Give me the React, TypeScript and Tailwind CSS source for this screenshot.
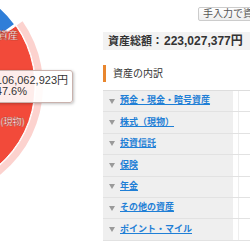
import React from 'react'

const CX = -70
const CY = 86
const R = 105

function polar(r: number, deg: number): [number, number] {
  const a = (deg * Math.PI) / 180
  return [CX + r * Math.cos(a), CY + r * Math.sin(a)]
}

function slicePath(r: number, from: number, to: number): string {
  const [x1, y1] = polar(r, from)
  const [x2, y2] = polar(r, to)
  const large = to - from > 180 ? 1 : 0
  return `M ${CX} ${CY} L ${x1} ${y1} A ${r} ${r} 0 ${large} 1 ${x2} ${y2} Z`
}

function ringPath(r1: number, r2: number, from: number, to: number): string {
  const [a1, b1] = polar(r2, from)
  const [a2, b2] = polar(r2, to)
  const [c1, d1] = polar(r1, to)
  const [c2, d2] = polar(r1, from)
  const large = to - from > 180 ? 1 : 0
  return `M ${a1} ${b1} A ${r2} ${r2} 0 ${large} 1 ${a2} ${b2} L ${c1} ${d1} A ${r1} ${r1} 0 ${large} 0 ${c2} ${d2} Z`
}

const ROWS = ['預金・現金・暗号資産', '株式（現物）', '投資信託', '保険', '年金', 'その他の資産', 'ポイント・マイル']

function PieChart() {
  return (
    <svg width="103" height="250" className="block">
      <path d={slicePath(R, -130, -36)} fill="#2f7ed8" stroke="#ffffff" strokeWidth="1.5" />
      <path d={ringPath(R + 1, R + 8, -35, 160)} fill="#f24a3a" fillOpacity="0.25" />
      <path d={slicePath(R, -35, 160)} fill="#f24a3a" stroke="#ffffff" strokeWidth="1" />
      <text
        x="18"
        y="39"
        textAnchor="end"
        fontSize="10"
        fontWeight="bold"
        fill="#ffffff"
        stroke="#b83a2c"
        strokeWidth="0.4"
        fontFamily="'Noto Sans CJK JP', sans-serif"
      >
        その他の資産
      </text>
      <text
        x="25"
        y="125"
        textAnchor="end"
        fontSize="9"
        fontWeight="bold"
        fill="#ffffff"
        stroke="#b83a2c"
        strokeWidth="0.4"
        fontFamily="'Noto Sans CJK JP', sans-serif"
      >
        株式(現物)
      </text>
    </svg>
  )
}

export default function App() {
  return (
    <div
      className="relative flex w-[250px] h-[250px] overflow-hidden bg-white text-[#333333]"
      style={{ fontFamily: "'Liberation Sans', 'Noto Sans CJK JP', sans-serif" }}
    >
      <div className="relative w-[103px] shrink-0">
        <PieChart />
        <div className="absolute right-[30px] top-[70px] h-[33px] rounded-[3px] border border-[#c9b2ad] bg-white/90 shadow-[1px_1px_3px_rgba(0,0,0,0.25)] pl-[8px] pr-[4px] pt-[4px] text-[11px] leading-[11px] text-[#333333] whitespace-nowrap">
          <div>106,062,923円</div>
          <div>47.6%</div>
        </div>
      </div>

      <div className="flex flex-col w-[147px] shrink-0">
        <div className="flex h-[32px] pt-[7px] pl-[95px]">
          <div className="h-[14px] px-[4px] border border-[#cccccc] rounded-[2px] bg-gradient-to-b from-white to-[#eeeeee] text-[10px] leading-[12px] text-[#555555] whitespace-nowrap">
            手入力で資産を追加
          </div>
        </div>

        <div className="flex items-center h-[18px] bg-[#f2f2f2] pl-[5px] text-[11px] font-bold whitespace-nowrap">
          <span className="w-[56px]">資産総額：</span>
          <span className="text-[12px]">223,027,377円</span>
        </div>

        <div className="flex items-center h-[17px] mt-[15px] whitespace-nowrap">
          <div className="w-[3px] h-[17px] bg-[#e8862e]" />
          <span className="ml-[7px] text-[10px]">資産の内訳</span>
        </div>

        <div className="mt-[8px] border-t border-[#dddddd]">
          {ROWS.map((label) => (
            <div key={label} className="flex h-[21.4px] border-b border-[#e2e2e2]">
              <div className="flex items-center w-[130px] bg-[#efefef] pl-[6px] whitespace-nowrap">
                <svg width="6" height="5" viewBox="0 0 6 5" className="shrink-0">
                  <path d="M0 0 L6 0 L3 5 Z" fill="#9a9a9a" />
                </svg>
                <a className="ml-[5px] text-[9px] font-bold text-[#1f7fd6] underline">{label}</a>
              </div>
              <div className="w-[5px]" />
              <div className="flex-1 border-l border-[#eeeeee]" />
            </div>
          ))}
        </div>
      </div>
    </div>
  )
}
